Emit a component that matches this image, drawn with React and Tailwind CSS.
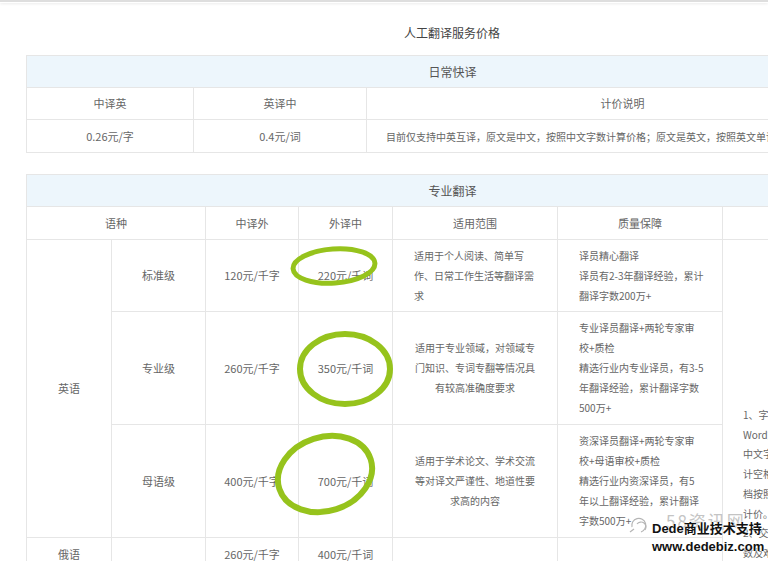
import React from 'react';

const cell = 'border border-[#e6e6e6] p-0 text-center align-middle text-[11px] text-[#666] whitespace-nowrap';
const band = 'border border-[#e6e6e6] bg-[#edf6fc] p-0 text-center align-middle text-[12px] text-[#555]';

const Lines = ({ lines, align = 'left' }) => (
  <div className={`px-[21px] text-[10px] leading-[20px] ${align === 'left' ? 'text-left' : 'text-center'}`}>
    {lines.map((l, i) => (
      <div key={i}>{l}</div>
    ))}
  </div>
);

const GreenRings = () => (
  <svg className="absolute left-0 top-0 pointer-events-none" width="768" height="561" viewBox="0 0 768 561">
    <g fill="none" stroke="#96c31c" strokeLinecap="round">
      <ellipse cx="334" cy="266" rx="41" ry="17" strokeWidth="5" transform="rotate(-4 334 266)" />
      <ellipse cx="345" cy="369" rx="45" ry="35" strokeWidth="6" />
      <ellipse cx="325" cy="474" rx="48" ry="37" strokeWidth="6" transform="rotate(-18 325 474)" />
    </g>
  </svg>
);

const Watermark = () => (
  <div className="absolute left-[626px] top-[511px] w-[142px] h-[50px] pointer-events-none">
    <svg className="absolute left-[2px] top-[2px]" width="22" height="22" viewBox="0 0 22 22">
      <g fill="none" stroke="#b5b5b5" strokeWidth="1.2">
        <path d="M4 14 a7 7 0 1 1 9 5" />
        <path d="M9 11 a5 5 0 1 1 8 6" />
        <path d="M2 19 l4 -3" />
      </g>
    </svg>
    <div className="absolute left-[40px] top-[0px] whitespace-nowrap text-[17px] leading-[20px] text-[#c4c4c4] tracking-[2px]">58资讯网</div>
    <div className="absolute left-[26px] top-[9px] whitespace-nowrap text-[13px] leading-[18px] font-bold text-[#111] [text-shadow:0_0_2px_#fff,0_0_2px_#fff,0_0_1px_#fff] font-['Liberation_Sans','Noto_Sans_CJK_SC',sans-serif]">
      Dede商业技术支持
    </div>
    <div className="absolute left-[26px] top-[28px] whitespace-nowrap text-[13px] leading-[16px] font-bold text-[#111] [text-shadow:0_0_2px_#fff,0_0_2px_#fff,0_0_1px_#fff] font-['Liberation_Sans',sans-serif]">
      www.dedebiz.com
    </div>
  </div>
);

export default function App() {
  return (
    <div className="relative w-[768px] h-[561px] overflow-hidden bg-white font-['Noto_Sans_CJK_SC','Noto_Sans',sans-serif]">
      <div className="h-[3px] border-t-2 border-[#dedede] shadow-[0_1px_3px_rgba(0,0,0,0.08)]" />
      <div className="pl-[26px]">
        <div className="w-[852px] h-[52px] pt-[22px] text-center text-[12px] leading-[16px] text-[#444]">人工翻译服务价格</div>

        <table className="w-[852px] table-fixed border-collapse">
          <colgroup>
            <col className="w-[167px]" />
            <col className="w-[173px]" />
            <col className="w-[512px]" />
          </colgroup>
          <tbody>
            <tr className="h-[32px]">
              <td colSpan={3} className={band}>日常快译</td>
            </tr>
            <tr className="h-[32px]">
              <td className={cell}>中译英</td>
              <td className={cell}>英译中</td>
              <td className={cell}>计价说明</td>
            </tr>
            <tr className="h-[33px]">
              <td className={cell}>0.26元/字</td>
              <td className={cell}>0.4元/词</td>
              <td className={cell}>
                <div className="pl-[19px] text-left text-[10px]">目前仅支持中英互译，原文是中文，按照中文字数计算价格；原文是英文，按照英文单词数计算价格。</div>
              </td>
            </tr>
          </tbody>
        </table>

        <table className="mt-[21px] w-[852px] table-fixed border-collapse">
          <colgroup>
            <col className="w-[85px]" />
            <col className="w-[94px]" />
            <col className="w-[93px]" />
            <col className="w-[94px]" />
            <col className="w-[165px]" />
            <col className="w-[165px]" />
            <col className="w-[156px]" />
          </colgroup>
          <tbody>
            <tr className="h-[32px]">
              <td colSpan={7} className={band}>专业翻译</td>
            </tr>
            <tr className="h-[33px]">
              <td colSpan={2} className={cell}>语种</td>
              <td className={cell}>中译外</td>
              <td className={cell}>外译中</td>
              <td className={cell}>适用范围</td>
              <td className={cell}>质量保障</td>
              <td className={cell}>计价说明</td>
            </tr>
            <tr className="h-[72px]">
              <td rowSpan={3} className={cell}>英语</td>
              <td className={cell}>标准级</td>
              <td className={cell}>120元/千字</td>
              <td className={cell}>220元/千词</td>
              <td className={cell}>
                <Lines lines={['适用于个人阅读、简单写', '作、日常工作生活等翻译需', '求']} />
              </td>
              <td className={cell}>
                <Lines lines={['译员精心翻译', '译员有2-3年翻译经验，累计', '翻译字数200万+']} />
              </td>
              <td rowSpan={4} className={`${cell} align-top`}>
                <div className="pt-[165px] pl-[20px] text-left text-[10px] leading-[19.7px]">
                  <div>1、字数统计依据</div>
                  <div>Word文档中字数</div>
                  <div>中文字符数（不</div>
                  <div>计空格），英文文</div>
                  <div>档按照英文单词数</div>
                  <div>计价。</div>
                  <div>2、交稿时间视字</div>
                  <div>数及难度而定。</div>
                </div>
              </td>
            </tr>
            <tr className="h-[113px]">
              <td className={cell}>专业级</td>
              <td className={cell}>260元/千字</td>
              <td className={cell}>350元/千词</td>
              <td className={cell}>
                <Lines align="center" lines={['适用于专业领域，对领域专', '门知识、专词专翻等情况具', '有较高准确度要求']} />
              </td>
              <td className={cell}>
                <Lines lines={['专业译员翻译+两轮专家审', '校+质检', '精选行业内专业译员，有3-5', '年翻译经验，累计翻译字数', '500万+']} />
              </td>
            </tr>
            <tr className="h-[113px]">
              <td className={cell}>母语级</td>
              <td className={cell}>400元/千字</td>
              <td className={cell}>700元/千词</td>
              <td className={cell}>
                <Lines align="center" lines={['适用于学术论文、学术交流', '等对译文严谨性、地道性要', '求高的内容']} />
              </td>
              <td className={cell}>
                <Lines lines={['资深译员翻译+两轮专家审', '校+母语审校+质检', '精选行业内资深译员，有5', '年以上翻译经验，累计翻译', '字数500万+']} />
              </td>
            </tr>
            <tr className="h-[34px]">
              <td className={cell}>俄语</td>
              <td className={cell}></td>
              <td className={cell}>260元/千字</td>
              <td className={cell}>400元/千词</td>
              <td className={cell}></td>
              <td className={cell}></td>
            </tr>
          </tbody>
        </table>
      </div>
      <GreenRings />
      <Watermark />
    </div>
  );
}
